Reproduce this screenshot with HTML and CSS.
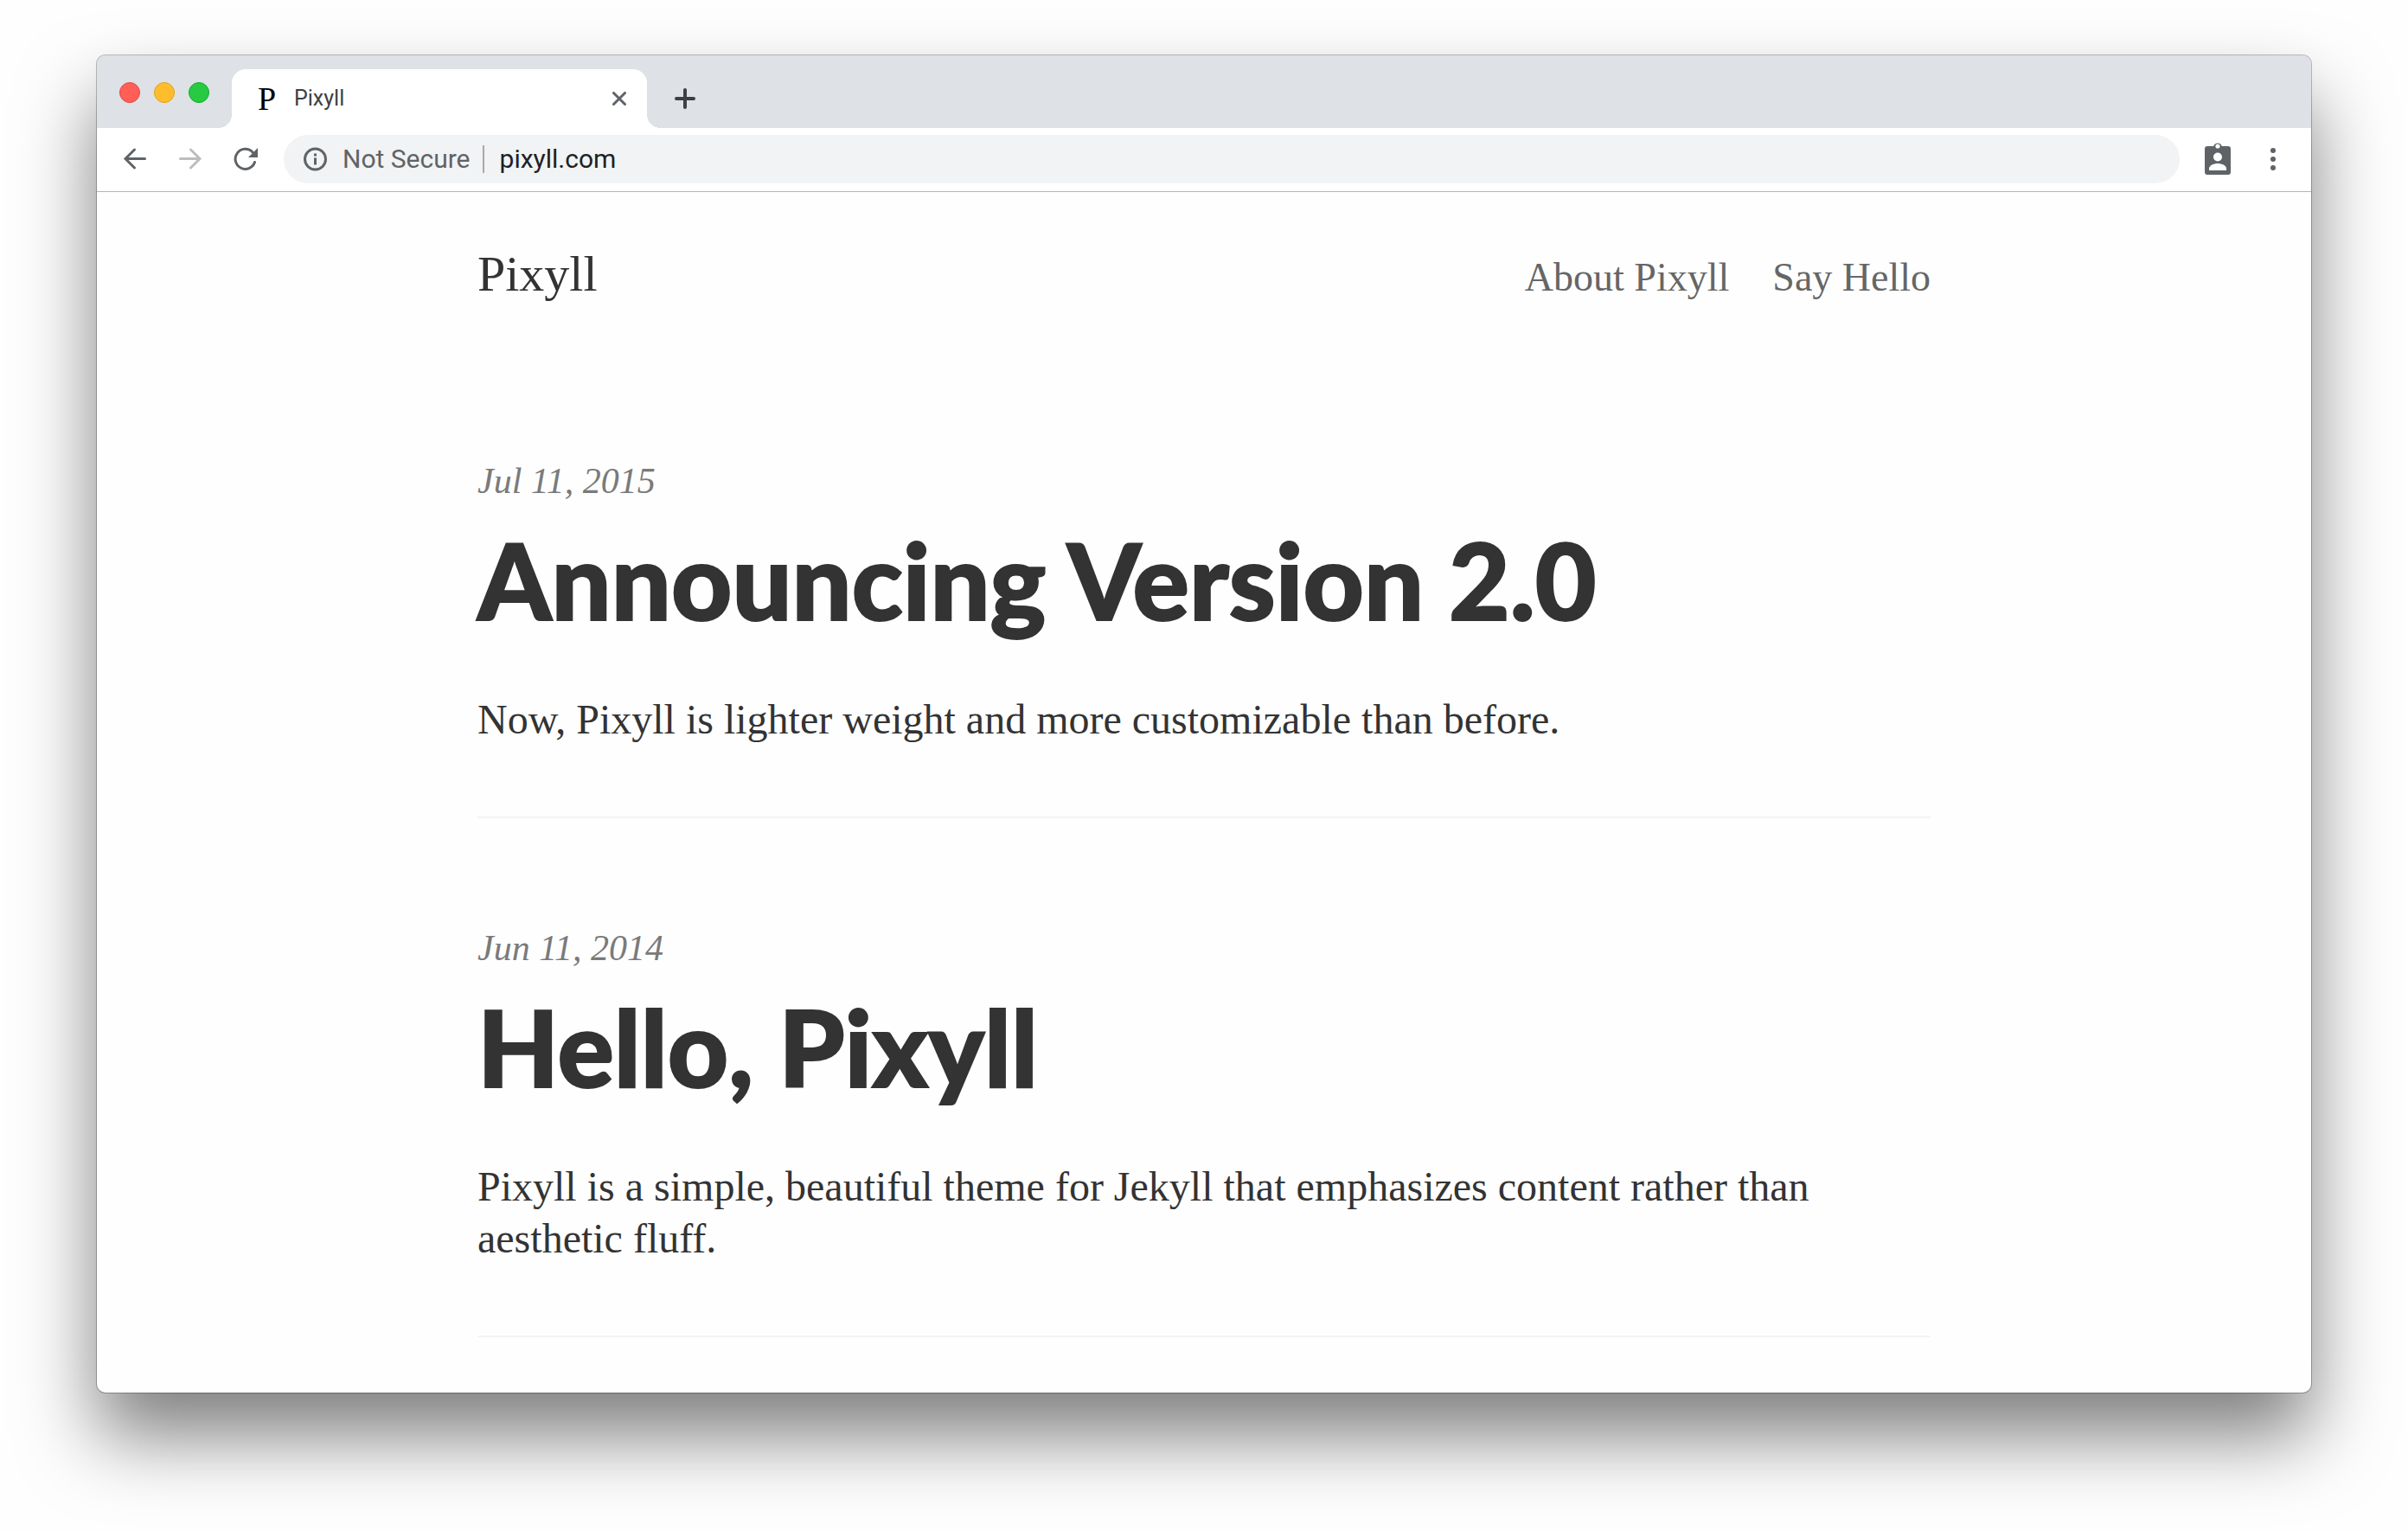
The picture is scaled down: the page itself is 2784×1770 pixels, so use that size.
FILE: index.html
```html
<!DOCTYPE html>
<html lang="en">
<head>
<meta charset="utf-8">
<title>Pixyll</title>
<link rel="stylesheet" href="styles.css">
</head>
<body>
<div class="window">
  <div class="tab-strip">
    <div class="lights">
      <button class="light light-close" aria-label="Close window"></button>
      <button class="light light-min" aria-label="Minimize window"></button>
      <button class="light light-max" aria-label="Zoom window"></button>
    </div>
    <div class="tab">
      <span class="favicon">P</span>
      <span class="tab-title">Pixyll</span>
      <button class="icon-button" aria-label="Close tab">
        <svg width="16" height="16" viewBox="0 0 16 16" fill="none" stroke="#5f6368" stroke-width="3" stroke-linecap="round"><path d="M1.500 1.500 14.500 14.500M14.500 1.500 1.500 14.500"/></svg>
      </button>
    </div>
    <button class="icon-button new-tab" aria-label="New tab">
      <svg width="24" height="24" viewBox="0 0 24 24" fill="none" stroke="#3c4043" stroke-width="4" stroke-linecap="round"><path d="M12 2V22M2 12H22"/></svg>
    </button>
  </div>
  <div class="toolbar">
    <div class="nav-buttons">
      <button class="icon-button" aria-label="Back">
        <svg width="28" height="28" viewBox="0 0 28 28" fill="none" stroke="#5f6368" stroke-width="3" stroke-linecap="round"><path d="M25.500 13.500H3M13.500 3 3 13.500 13.500 24"/></svg>
      </button>
      <button class="icon-button" aria-label="Forward">
        <svg width="28" height="28" viewBox="0 0 28 28" fill="none" stroke="#bdbdbd" stroke-width="3" stroke-linecap="round"><path d="M2.500 13.500H25M14.500 3 25 13.500 14.500 24"/></svg>
      </button>
      <button class="icon-button" aria-label="Reload">
        <svg width="28" height="28" viewBox="0 0 28 28"><path d="M24.500 17.500A11.500 11.500 0 1 1 22 6" fill="none" stroke="#5f6368" stroke-width="3" stroke-linecap="round"/><path d="M28 1V12H17Z" fill="#5f6368"/></svg>
      </button>
    </div>
    <div class="omnibox">
      <svg width="28" height="28" viewBox="0 0 28 28"><circle cx="14.500" cy="14" r="12" fill="none" stroke="#5f6368" stroke-width="3"/><path d="M13 7.500h3v3h-3zM13 12.500h3v8h-3z" fill="#5f6368"/></svg>
      <span class="security">Not Secure</span>
      <input class="address" type="text" value="pixyll.com" aria-label="Address">
    </div>
    <button class="icon-button" aria-label="Profile">
      <svg width="30" height="40" viewBox="0 0 30 40"><path d="M3 5H10.200A5 5 0 0 1 19.800 5H27Q30 5 30 8V35Q30 38 27 38H3Q0 38 0 35V8Q0 5 3 5Z" fill="#5f6368"/><circle cx="15" cy="5" r="2.600" fill="#fff"/><circle cx="15" cy="17.500" r="5" fill="#fff"/><path d="M5 33V31C5 27 11 25 15 25S25 27 25 31V33Z" fill="#fff"/></svg>
    </button>
    <button class="icon-button menu" aria-label="Menu">
      <svg width="6" height="26" viewBox="0 0 6 26" fill="#5f6368"><circle cx="3" cy="3" r="3"/><circle cx="3" cy="13" r="3"/><circle cx="3" cy="23" r="3"/></svg>
    </button>
  </div>
  <div class="page">
    <header class="site-header">
      <a class="site-title" href="#">Pixyll</a>
      <nav class="site-nav">
        <a href="#">About Pixyll</a>
        <a href="#">Say Hello</a>
      </nav>
    </header>
    <main>
      <article class="post">
        <time class="date" datetime="2015-07-11">Jul 11, 2015</time>
        <h1 class="title">Announcing Version 2.0</h1>
        <p class="excerpt">Now, Pixyll is lighter weight and more customizable than before.</p>
      </article>
      <article class="post">
        <time class="date" datetime="2014-06-11">Jun 11, 2014</time>
        <h1 class="title">Hello, Pixyll</h1>
        <p class="excerpt">Pixyll is a simple, beautiful theme for Jekyll that emphasizes content rather than aesthetic fluff.</p>
      </article>
    </main>
  </div>
</div>
</body>
</html>
```
FILE: styles.css
```css
* { box-sizing: border-box; }

body {
  margin: 0;
  padding: 64px 112px 160px;
  background: #fefefe;
  font-family: "Liberation Serif", serif;
}

button {
  padding: 0;
  border: 0;
  background: none;
}

a {
  color: inherit;
  text-decoration: none;
}

svg { display: block; }

.window {
  border-radius: 10px;
  overflow: hidden;
  background: #fefefe;
  box-shadow: 0 0 0 1px rgba(0, 0, 0, 0.25), 0 50px 88px rgba(0, 0, 0, 0.5);
}

/* Tab strip */
.tab-strip {
  display: flex;
  align-items: flex-end;
  height: 84px;
  padding-left: 26px;
  background: #dee1e6;
}

.lights {
  display: flex;
  gap: 16px;
  width: 130px;
  padding-bottom: 29px;
}

.light {
  width: 24px;
  height: 24px;
  border-radius: 50%;
}

.light-close { background: #ff5f57; border: 1px solid #e2463f; }
.light-min { background: #ffbd2e; border: 1px solid #e1a116; }
.light-max { background: #28ca41; border: 1px solid #12ac28; }

.tab {
  position: relative;
  display: flex;
  align-items: center;
  width: 480px;
  height: 68px;
  padding: 0 24px 0 30px;
  border-radius: 16px 16px 0 0;
  background: #fff;
}

.tab::before,
.tab::after {
  content: "";
  position: absolute;
  bottom: 0;
  width: 16px;
  height: 16px;
}

.tab::before {
  right: 100%;
  background: radial-gradient(circle at 0 0, transparent 16px, #fff 16px);
}

.tab::after {
  left: 100%;
  background: radial-gradient(circle at 100% 0, transparent 16px, #fff 16px);
}

.favicon {
  width: 42px;
  font-size: 38px;
  line-height: 44px;
  color: #000;
}

.tab-title {
  flex: 1;
  font: 25px/32px Roboto, sans-serif;
  color: #3c4043;
}

.new-tab { margin: 0 0 22px 32px; }

/* Toolbar */
.toolbar {
  display: flex;
  align-items: center;
  height: 74px;
  padding: 0 41px 1px 30px;
  border-bottom: 1px solid #b3b5b8;
  background: #fff;
}

.nav-buttons {
  display: flex;
  gap: 36px;
  margin-right: 30px;
}

.omnibox {
  display: flex;
  flex: 1;
  align-items: center;
  height: 56px;
  padding: 0 22px;
  border-radius: 28px;
  background: #f1f3f4;
  font: 30px/32px Roboto, sans-serif;
  color: #5f6368;
}

.security {
  margin: 0 18px 0 18px;
  padding-right: 14px;
  border-right: 2px solid #a6a9ad;
}

.address {
  flex: 1;
  padding: 0;
  border: 0;
  background: none;
  font: inherit;
  color: #202124;
}

.toolbar > .icon-button { margin-left: 29px; }
.toolbar > .menu { margin-left: 46px; }

/* Page */
.page {
  max-width: 1680px;
  margin: 0 auto;
  padding-bottom: 64px;
}

.site-header {
  display: flex;
  align-items: baseline;
  justify-content: space-between;
  padding: 61px 0 119px;
}

.site-title {
  font-size: 58px;
  line-height: 68px;
  color: #333;
}

.site-nav {
  display: flex;
  gap: 50px;
  font-size: 46px;
  line-height: 60px;
  color: #666;
}

.post {
  padding: 56px 0 82px;
  border-bottom: 2px solid #f3f3f3;
}

.post + .post { padding-top: 120px; }

.date {
  display: block;
  font-size: 42px;
  line-height: 60px;
  font-style: italic;
  color: #7a7a7a;
}

.title {
  margin: 12px 0 60px;
  font-family: Lato, sans-serif;
  font-size: 122px;
  font-weight: 900;
  line-height: 144px;
  color: #333;
  -webkit-text-stroke: 2px #333;
}

.excerpt {
  margin: 0;
  font-size: 48px;
  line-height: 60px;
  color: #333;
}
```
